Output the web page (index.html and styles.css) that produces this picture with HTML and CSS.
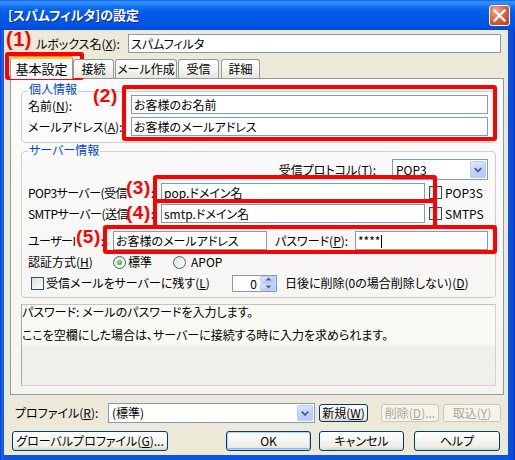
FILE: index.html
```html
<!DOCTYPE html>
<html lang="ja">
<head>
<meta charset="utf-8">
<title>[スパムフィルタ]の設定</title>
<link rel="stylesheet" href="styles.css">
</head>
<body>
<div class="window">
  <div class="titlebar">
    <span class="title">[スパムフィルタ]の設定</span>
    <span class="close"><svg width="19" height="19" viewBox="0 0 19 19"><path d="M4.5 4.5L14.5 14.5M14.5 4.5L4.5 14.5" stroke="#fff" stroke-width="2.4" stroke-linecap="square"/></svg></span>
  </div>
  <div class="frame">
    <div class="client">
      <div class="mbrow">
        <span class="lbl w120 mb-lbl">ルボックス名(<u>X</u>):</span>
        <span class="input w373">スパムフィルタ</span>
      </div>

      <div class="tabs">
        <span class="tab sel">基本設定</span>
        <span class="tab t2">接続</span>
        <span class="tab t3">メール作成</span>
        <span class="tab t4">受信</span>
        <span class="tab t5">詳細</span>
      </div>

      <div class="panel">
        <div class="group g1">
          <span class="legend legend1">個人情報</span>
          <div class="frow">
            <span class="lbl w103 low">名前(<u>N</u>):</span>
            <span class="input w357">お客様のお名前</span>
          </div>
          <div class="frow mt3">
            <span class="lbl w103">メールアドレス(<u>A</u>):</span>
            <span class="input w357">お客様のメールアドレス</span>
          </div>
        </div>

        <div class="group g2">
          <span class="legend legend2">サーバー情報</span>
          <div class="frow proto">
            <span class="lbl proto-lbl">受信プロトコル(<u>T</u>):</span>
            <span class="combo w96">
              <span class="combo-text">POP3</span>
              <span class="dd"><svg width="15" height="17" viewBox="0 0 15 17"><path d="M4 7L7.5 10.5L11 7" fill="none" stroke="#4D6185" stroke-width="2"/></svg></span>
            </span>
          </div>
          <div class="frow mt3">
            <span class="lbl w133 cutlbl"><span class="cut">POP3サーバー(受信</span><span class="colon">:</span></span>
            <span class="input w264">pop.ドメイン名</span>
            <span class="check ml4"></span>
            <span class="lbl ml3">POP3S</span>
          </div>
          <div class="frow mt2">
            <span class="lbl w133 cutlbl"><span class="cut">SMTPサーバー(送信</span><span class="colon">:</span></span>
            <span class="input w264">smtp.ドメイン名</span>
            <span class="check ml4"></span>
            <span class="lbl ml3">SMTPS</span>
          </div>
          <div class="frow mt8">
            <span class="lbl w85 cutlbl cut-user"><span class="cut">ユーザーI</span><span class="colon">:</span></span>
            <span class="input w154">お客様のメールアドレス</span>
            <span class="lbl w80 ml8">パスワード(<u>P</u>):</span>
            <span class="input w133">****<span class="caret"></span></span>
          </div>
          <div class="frow short mt3">
            <span class="lbl w85">認証方式(<u>H</u>)</span>
            <span class="ropt">
              <span class="radio on"></span>
              <span class="lbl ml2">標準</span>
            </span>
            <span class="radio"></span>
            <span class="lbl ml5">APOP</span>
          </div>
          <div class="frow short mt3">
            <span class="check ml3"></span>
            <span class="lbl w186 ml2">受信メールをサーバーに残す(<u>L</u>)</span>
            <span class="spin">
              <span class="spin-val">0</span>
              <span class="spin-btns">
                <span class="sb"><svg width="7" height="4" viewBox="0 0 7 4"><path d="M0.5 3.5L3.5 0.5L6.5 3.5Z" fill="#4D6185"/></svg></span>
                <span class="sb"><svg width="7" height="4" viewBox="0 0 7 4"><path d="M0.5 0.5L3.5 3.5L6.5 0.5Z" fill="#4D6185"/></svg></span>
              </span>
            </span>
            <span class="lbl ml8">日後に削除(0の場合削除しない)(<u>D</u>)</span>
          </div>
        </div>

        <div class="desc">
          <p class="desc-line">パスワード: メールのパスワードを入力します。</p>
          <p class="desc-line second">ここを空欄にした場合は、サーバーに接続する時に入力を求められます。</p>
        </div>
      </div>

      <div class="profrow">
        <span class="lbl w93">プロファイル(<u>R</u>):</span>
        <span class="combo w207 h20">
          <span class="combo-text">(標準)</span>
          <span class="dd"><svg width="15" height="16" viewBox="0 0 15 16"><path d="M4 6.5L7.5 10L11 6.5" fill="none" stroke="#4D6185" stroke-width="2"/></svg></span>
        </span>
        <span class="btn small w49 ml4">新規(<u>W</u>)</span>
        <span class="btn small disabled w58 ml13">削除(<u>D</u>)...</span>
        <span class="btn small disabled w58 ml4">取込(<u>Y</u>)</span>
      </div>

      <div class="btnrow">
        <span class="btn w156">グローバルプロファイル(<u>G</u>)...</span>
        <span class="btn default w85 ml58">OK</span>
        <span class="btn w85 ml8">キャンセル</span>
        <span class="btn w86 ml10">ヘルプ</span>
      </div>
    </div>
  </div>

  <div class="mark box1"></div>
  <div class="mark box2"></div>
  <div class="mark box3"></div>
  <div class="mark box4"></div>
  <div class="mark box5"></div>
  <span class="num n1">(1)</span>
  <span class="num n2">(2)</span>
  <span class="num n3">(3)</span>
  <span class="num n4">(4)</span>
  <span class="num n5">(5)</span>
</div>
</body>
</html>
```

FILE: styles.css
```css
* { box-sizing: border-box; }
html, body { margin: 0; padding: 0; }
body {
  background: #ffffff;
  font-family: "Noto Sans CJK JP", "Noto Sans", sans-serif;
  font-size: 12px;
  color: #000;
  font-feature-settings: "palt" 1;
}
u { text-decoration: underline; text-underline-offset: 1px; }

.window {
  position: relative;
  width: 515px;
  height: 460px;
  display: flex;
  flex-direction: column;
  background: #0A55E3;
  overflow: hidden;
}

/* title bar */
.titlebar {
  flex: none;
  height: 30px;
  display: flex;
  align-items: center;
  padding: 0 5px 0 8px;
  background: linear-gradient(to bottom,
    #0A5FEA 0, #3D95FF 2px, #2A86FB 4px, #0F6EF2 7px, #0460EC 11px,
    #0058E6 17px, #0055E4 24px, #0052E0 27px, #0046D2 30px);
}
.title {
  color: #fff;
  font-weight: bold;
  font-size: 13px;
  line-height: 16px;
  text-shadow: 1px 1px 0 #0F2A9A;
}
.close {
  margin-left: auto;
  width: 21px;
  height: 21px;
  border: 1px solid #fff;
  border-radius: 3px;
  display: flex;
  background: radial-gradient(circle at 30% 25%, #F2A993 0, #E4694A 40%, #CF4B28 75%, #B83718 100%);
}

.frame {
  flex: 1;
  display: flex;
  padding: 0 7px 5px 4px;
  background: linear-gradient(to right, #0638C8 0, #1A68EE 2px, #0A55E3 4px, #0A55E3 508px, #0848D6 513px, #0534C2 515px);
}
.client {
  width: 504px;
  height: 425px;
  background: #ECE9D8;
  display: flex;
  flex-direction: column;
}

/* generic */
.lbl { flex: none; white-space: nowrap; line-height: 14px; }
.lbl.low { padding-top: 3px; }
.frow { display: flex; align-items: center; height: 19px; }
.frow.short { height: 18px; }
.input {
  display: block;
  flex: none;
  height: 19px;
  border: 1px solid #7F9DB9;
  background: #fff;
  padding: 0 2px;
  line-height: 17px;
  white-space: nowrap;
  overflow: hidden;
}
.caret { display: inline-block; width: 1px; height: 13px; background: #000; vertical-align: -2px; margin-left: 1px; }

.cutlbl { display: flex; justify-content: space-between; padding-right: 7px; }
.cut-user { padding-right: 9px; }
.cut { display: block; white-space: nowrap; letter-spacing: -0.55px; }

.w80 { width: 80px; } .w85 { width: 85px; } .w86 { width: 86px; } .w93 { width: 93px; }
.w96 { width: 96px; } .w103 { width: 103px; } .w120 { width: 120px; } .w133 { width: 133px; }
.w154 { width: 154px; } .w156 { width: 156px; } .w186 { width: 186px; } .w207 { width: 207px; }
.w264 { width: 264px; } .w357 { width: 357px; } .w373 { width: 373px; }
.w49 { width: 49px; } .w58 { width: 58px; }
.ml2 { margin-left: 2px; } .ml3 { margin-left: 3px; } .ml4 { margin-left: 4px; } .ml5 { margin-left: 5px; }
.ml8 { margin-left: 8px; } .ml10 { margin-left: 10px; } .ml13 { margin-left: 13px; } .ml58 { margin-left: 58px; }
.mt2 { margin-top: 2px; } .mt3 { margin-top: 3px; } .mt8 { margin-top: 8px; }

/* mailbox row */
.mbrow {
  display: flex;
  align-items: center;
  height: 19px;
  margin: 4px 0 0 4px;
}
.mb-lbl { padding-left: 28px; }

/* tabs */
.tabs {
  position: relative;
  z-index: 2;
  display: flex;
  align-items: flex-end;
  height: 23px;
  margin: 3px 0 -1px 6px;
}
.tab {
  flex: none;
  height: 19px;
  margin-bottom: 1px;
  display: flex;
  align-items: center;
  justify-content: center;
  border: 1px solid #919B9C;
  border-bottom: none;
  border-radius: 3px 3px 0 0;
  background: linear-gradient(#FFFFFF, #F3F3EF 60%, #E6E5DE);
  line-height: 16px;
  white-space: nowrap;
}
.tab.sel {
  width: 63px;
  height: 23px;
  margin-bottom: 0;
  border-top: none;
  padding-top: 2px;
  font-size: 13px;
  background: linear-gradient(#E68B2C 0, #E68B2C 1px, #FFC83C 1px, #FFC83C 3px, #FCFCFE 3px);
}
.t2 { width: 41px; }
.t3 { width: 62px; margin-left: 1px; }
.t4 { width: 41px; margin-left: 1px; }
.t5 { width: 39px; margin-left: 2px; }

/* panel */
.panel {
  flex: none;
  width: 494px;
  height: 317px;
  margin-left: 6px;
  border: 1px solid #919B9C;
  background: linear-gradient(#FCFCFE, #F4F3EE);
  padding: 0 7px 0 10px;
  display: flex;
  flex-direction: column;
}
.group {
  border: 1px solid #D0D0BF;
  border-radius: 4px;
  display: flex;
  flex-direction: column;
}
.g1 { margin-top: 12px; padding: 0 7px 6px 6px; }
.g2 { margin-top: 8px; padding: 0 7px 5px 6px; }
.legend {
  align-self: flex-start;
  height: 13px;
  line-height: 13px;
  margin: -9px 0 -1px 0;
  padding: 0 1px;
  color: #0046D5;
  background: #FBFBFC;
  white-space: nowrap;
}
.legend1 { margin-top: -10px; margin-bottom: 0; }
.legend2 { margin-bottom: 3px; background: #FAFAFA; }

.proto { height: 21px; justify-content: flex-end; }
.proto-lbl { margin-right: 16px; }

.combo {
  flex: none;
  display: flex;
  align-items: center;
  height: 21px;
  border: 1px solid #7F9DB9;
  background: #fff;
  padding: 1px;
}
.combo.h20 { height: 20px; }
.combo-text { flex: 1; padding-left: 2px; line-height: 16px; white-space: nowrap; }
.dd {
  flex: none;
  width: 16px;
  height: 100%;
  border: 1px solid #B9CBF3;
  border-radius: 2px;
  background: linear-gradient(160deg, #E2EBFE 0, #C3D4FB 45%, #B3C8F7 100%);
  display: flex;
  align-items: center;
  justify-content: center;
}

.check {
  flex: none;
  width: 13px;
  height: 13px;
  border: 1px solid #1C5180;
  background: linear-gradient(135deg, #DCDCD7, #FFFFFF);
}
.radio {
  flex: none;
  width: 13px;
  height: 13px;
  border-radius: 50%;
  border: 1px solid #3D6187;
  background: linear-gradient(135deg, #DCDCD7, #FFFFFF);
  display: flex;
  align-items: center;
  justify-content: center;
}
.radio.on::after {
  content: "";
  width: 5px;
  height: 5px;
  border-radius: 50%;
  background: radial-gradient(circle at 35% 35%, #8FE28A, #21A121);
}
.ropt { flex: none; width: 60px; display: flex; align-items: center; }

.spin {
  flex: none;
  display: flex;
  width: 45px;
  height: 17px;
  border: 1px solid #7F9DB9;
  background: #fff;
}
.spin-val { flex: 1; text-align: right; padding-right: 3px; line-height: 15px; }
.spin-btns { flex: none; width: 16px; display: flex; flex-direction: column; }
.sb {
  flex: 1;
  display: flex;
  align-items: center;
  justify-content: center;
  border: 1px solid #B9CBF3;
  border-radius: 2px;
  background: linear-gradient(160deg, #E2EBFE 0, #C3D4FB 50%, #B3C8F7 100%);
}

.desc {
  flex: none;
  height: 82px;
  margin-top: 6px;
  border: 1px solid #D2D1C8;
  border-left-color: #A9A89F;
  border-top-color: #C4C3BA;
  background: linear-gradient(#F8F8F4 0, #F8F8F4 50%, #EFEEE8 52%, #F1F0EA 100%);
}
.desc-line { margin: 0; line-height: 14px; white-space: nowrap; }
.desc-line.second { margin-top: 9px; }

/* bottom rows */
.profrow {
  display: flex;
  align-items: center;
  height: 20px;
  margin: 8px 0 0 11px;
}
.btnrow {
  display: flex;
  align-items: center;
  height: 20px;
  margin: 8px 0 0 8px;
}
.btn {
  flex: none;
  display: flex;
  align-items: center;
  justify-content: center;
  height: 20px;
  border: 1px solid #003C74;
  border-radius: 3px;
  background: linear-gradient(#FFFFFF 0, #F8F8F5 35%, #EEEDE7 80%, #D8D3C8 100%);
  line-height: 16px;
  white-space: nowrap;
}
.btn.small { height: 18px; }
.btn.default { box-shadow: inset 0 0 0 1px #B9D1F8, inset 0 -1px 0 1px #97B6EC; }
.btn.disabled {
  border-color: #C9C7BA;
  background: #F5F4EA;
  color: #ACA899;
}

/* annotations (overlay) */
.mark {
  position: absolute;
  border: 4px solid #FF0000;
  border-radius: 3px;
  pointer-events: none;
}
.box1 { left: 5px; top: 52px; width: 79px; height: 28px; }
.box2 { left: 122px; top: 85px; width: 375px; height: 56px; }
.box3 { left: 153px; top: 175px; width: 284px; height: 28px; }
.box4 { left: 153px; top: 199px; width: 284px; height: 30px; }
.box5 { left: 103px; top: 225px; width: 394px; height: 29px; }

.num {
  position: absolute;
  font-family: "Liberation Sans", Arial, sans-serif;
  font-weight: bold;
  font-size: 19px;
  line-height: 19px;
  height: 20px;
  letter-spacing: 0.5px;
  color: #FF0000;
}
.n1 { left: 6px; top: 30px; font-size: 20px; }
.n2 { left: 93px; top: 86px; }
.n3 { left: 126px; top: 178px; }
.n4 { left: 126px; top: 203px; }
.n5 { left: 76px; top: 227px; }
```
